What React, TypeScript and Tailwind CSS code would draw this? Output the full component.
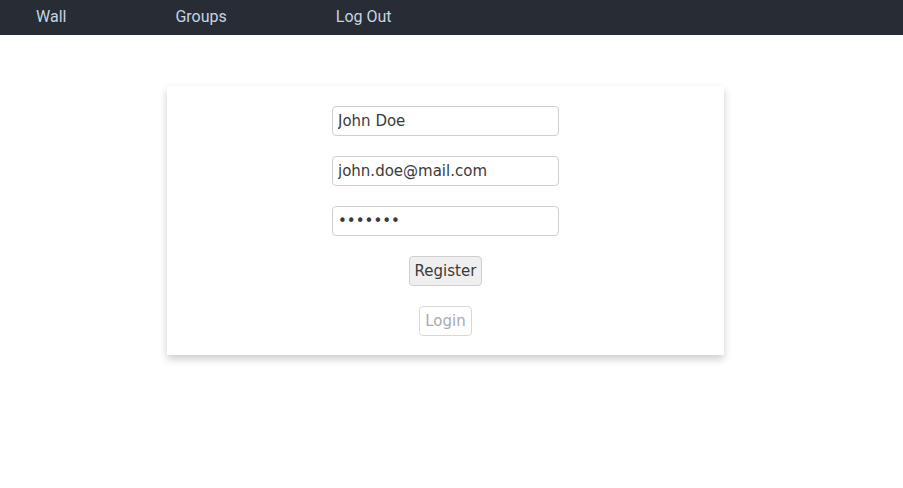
const links = ["Wall", "Groups", "Log Out"];

const Field: React.FC<{ type: string; value: string }> = ({ type, value }) => (
  <input
    type={type}
    defaultValue={value}
    className="w-[227px] h-[30px] px-[5px] border border-[#cfcfcf] rounded-[4px] text-[15px] text-[#3a3a3a] font-['DejaVu_Sans',sans-serif] outline-none"
  />
);

export default function App() {
  return (
    <div className="min-h-[488px] bg-white">
      <nav className="h-[35px] bg-[#282c34] flex items-center pl-[36px] pb-[2px] gap-[109px] font-['Roboto',sans-serif] text-[16px] text-[#c6d4e3]">
        {links.map((l) => (
          <a key={l} href="#" className="leading-none">
            {l}
          </a>
        ))}
      </nav>
      <div className="pt-[51px] pl-[167px]">
        <div className="w-[557px] bg-white shadow-[0_4px_8px_rgba(0,0,0,0.2)] flex flex-col items-center pt-[20px] pb-[19px] gap-[20px] font-['DejaVu_Sans',sans-serif]">
          <Field type="text" value="John Doe" />
          <Field type="email" value="john.doe@mail.com" />
          <Field type="password" value="1234567" />
          <button className="h-[30px] px-[5px] bg-[#efefef] border border-[#cfcfcf] rounded-[4px] text-[15px] text-[#3a3a3a]">
            Register
          </button>
          <button
            disabled
            className="h-[30px] px-[5px] bg-white border border-[#d8d8d8] rounded-[4px] text-[15px] text-[#a9a9b0]"
          >
            Login
          </button>
        </div>
      </div>
    </div>
  );
}
